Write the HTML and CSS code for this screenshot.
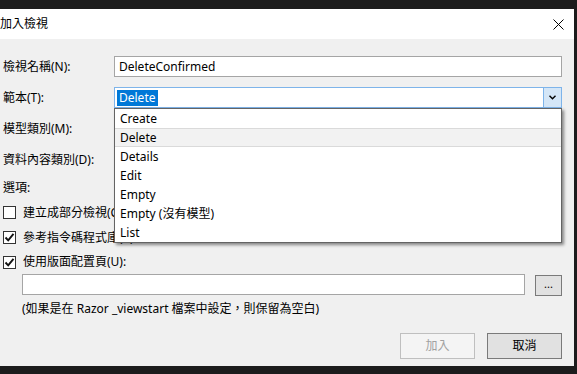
FILE: index.html
```html
<!DOCTYPE html>
<html lang="zh-Hant">
<head>
<meta charset="utf-8">
<title>加入檢視</title>
<link rel="stylesheet" href="styles.css">
</head>
<body>
<div class="dialog">
  <div class="titlebar">
    <span class="title">加入檢視</span>
    <svg class="close" width="11" height="11" viewBox="0 0 11 11"><path d="M0.5 0.5 L10.5 10.5 M10.5 0.5 L0.5 10.5" stroke="#000" stroke-width="1" fill="none"/></svg>
  </div>
  <div class="content">
    <div class="row">
      <span class="label">檢視名稱(N):</span>
      <div class="field">DeleteConfirmed</div>
    </div>
    <div class="row">
      <span class="label">範本(T):</span>
      <div class="combo open">
        <div class="combo-text"><span class="sel">Delete</span></div>
        <div class="combo-btn"><svg width="7" height="5" viewBox="0 0 7 5"><path d="M0.5 0.8 L3.5 3.8 L6.5 0.8" stroke="#000" stroke-width="1.4" fill="none"/></svg></div>
        <ul class="list">
          <li>Create</li>
          <li class="hover">Delete</li>
          <li>Details</li>
          <li>Edit</li>
          <li>Empty</li>
          <li>Empty (沒有模型)</li>
          <li>List</li>
        </ul>
      </div>
    </div>
    <div class="row">
      <span class="label">模型類別(M):</span>
      <div class="combo"><div class="combo-text"></div></div>
    </div>
    <div class="row">
      <span class="label">資料內容類別(D):</span>
      <div class="combo"><div class="combo-text"></div></div>
    </div>
    <div class="options-label">選項:</div>
    <div class="check-row first"><span class="box"></span><span>建立成部分檢視(C)</span></div>
    <div class="check-row"><span class="box checked"><svg width="11" height="11" viewBox="0 0 11 11"><path d="M1.5 5.5 L4.2 8.3 L9.5 1.8" stroke="#111" stroke-width="1.9" fill="none"/></svg></span><span>參考指令碼程式庫(R)</span></div>
    <div class="check-row last"><span class="box checked"><svg width="11" height="11" viewBox="0 0 11 11"><path d="M1.5 5.5 L4.2 8.3 L9.5 1.8" stroke="#111" stroke-width="1.9" fill="none"/></svg></span><span>使用版面配置頁(U):</span></div>
    <div class="layout-row">
      <div class="field"></div>
      <div class="browse">...</div>
    </div>
    <div class="hint">(如果是在 Razor _viewstart 檔案中設定，則保留為空白)</div>
    <div class="buttons">
      <div class="btn disabled">加入</div>
      <div class="btn default">取消</div>
    </div>
  </div>
</div>
</body>
</html>
```

FILE: styles.css
```css
html, body {
  margin: 0;
  padding: 0;
}
body {
  background: #1c1c1c;
  width: 577px;
  height: 374px;
  box-sizing: border-box;
  padding: 9px 3px 8px 0;
  font-family: "Noto Sans", "Noto Sans CJK TC", sans-serif;
  font-size: 12px;
  color: #000;
  overflow: hidden;
}
.dialog {
  height: 357px;
  background: #f0f0f0;
  display: flex;
  flex-direction: column;
}
.titlebar {
  height: 30px;
  flex: none;
  background: #fff;
  display: flex;
  align-items: center;
  justify-content: space-between;
  padding: 0 10px 0 0;
}
.title {
  font-size: 12px;
  line-height: 16px;
}
.close {
  display: block;
}
.content {
  padding: 17px 12px 0 3px;
  display: flex;
  flex-direction: column;
}
.row {
  display: flex;
  align-items: center;
  height: 21px;
  margin-bottom: 10px;
  line-height: 16px;
  flex: none;
}
.label {
  width: 111px;
  flex: none;
}
.field {
  flex: 1;
  height: 21px;
  box-sizing: border-box;
  border: 1px solid #a5a5a5;
  background: #fff;
  padding: 0 4px;
  line-height: 19px;
}
.combo {
  flex: 1;
  height: 21px;
  box-sizing: border-box;
  border: 1px solid #a5a5a5;
  background: #fff;
  display: flex;
  position: relative;
}
.combo.open {
  border-color: #7eb4ea;
}
.combo-text {
  flex: 1;
  padding: 1px 2px;
  line-height: 17px;
}
.sel {
  display: inline-block;
  background: #0078d7;
  color: #fff;
  padding: 0 2px;
  line-height: 16px;
}
.combo-btn {
  width: 17px;
  background: #d4e6f7;
  border-left: 1px solid #7eb4ea;
  display: flex;
  align-items: center;
  justify-content: center;
}
.list {
  position: absolute;
  top: 20px;
  left: -1px;
  right: -1px;
  margin: 0;
  padding: 0;
  list-style: none;
  background: #fff;
  border: 1px solid #646464;
  box-shadow: 2px 2px 3px rgba(0, 0, 0, 0.45);
  z-index: 5;
}
.list li {
  height: 19px;
  box-sizing: border-box;
  line-height: 18px;
  padding: 1px 0 0 5px;
}
.list li.hover {
  background: #f2f2f2;
  border-top: 1px solid #dadada;
  border-bottom: 1px solid #dadada;
  line-height: 16px;
}
.options-label {
  height: 16px;
  line-height: 16px;
  flex: none;
}
.check-row {
  display: flex;
  align-items: center;
  height: 25px;
  line-height: 16px;
  flex: none;
}
.check-row.first {
  margin-top: 4px;
}
.check-row.last {
  height: 24px;
}
.box {
  width: 13px;
  height: 13px;
  box-sizing: border-box;
  border: 1px solid #333;
  background: #fff;
  margin-right: 7px;
  display: flex;
  align-items: center;
  justify-content: center;
}
.box svg {
  display: block;
}
.layout-row {
  display: flex;
  align-items: flex-start;
  gap: 10px;
  margin-left: 19px;
  height: 22px;
  flex: none;
}
.browse {
  width: 27px;
  height: 21px;
  box-sizing: border-box;
  border: 1px solid #7a7a7a;
  background: #e1e1e1;
  text-align: center;
  line-height: 16px;
  font-size: 11px;
  margin-top: 1px;
}
.hint {
  margin: 5px 0 0 19px;
  height: 16px;
  line-height: 16px;
  flex: none;
}
.buttons {
  display: flex;
  justify-content: flex-end;
  gap: 12px;
  margin-top: 16px;
}
.btn {
  width: 75px;
  height: 26px;
  box-sizing: border-box;
  text-align: center;
  line-height: 24px;
}
.btn.disabled {
  background: #f4f4f4;
  border: 1px solid #bfbfbf;
  color: #a0a0a0;
}
.btn.default {
  background: #e1e1e1;
  border: 1px solid #7a7a7a;
}
```
